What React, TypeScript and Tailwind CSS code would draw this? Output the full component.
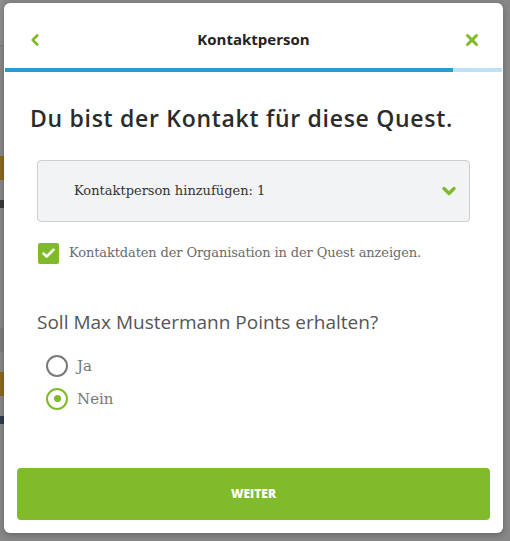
import { Check, ChevronDown, ChevronLeft, X } from "lucide-react";

const sans = { fontFamily: "'Open Sans', 'DejaVu Sans', sans-serif" };
const slab = { fontFamily: "'DejaVu Serif', 'Liberation Serif', serif" };

function Radio({ label, checked }: { label: string; checked?: boolean }) {
  return (
    <label className="flex items-center gap-[9px]">
      <span
        className={`flex h-[22px] w-[22px] items-center justify-center rounded-full border-2 ${
          checked ? "border-[#7fba2b]" : "border-[#7a7a7a]"
        }`}
      >
        {checked && <span className="h-[7px] w-[7px] rounded-full bg-[#7fba2b]" />}
      </span>
      <span className="text-[15px] text-[#777]" style={slab}>
        {label}
      </span>
    </label>
  );
}

export default function App() {
  return (
    <div className="relative h-[541px] w-[510px] overflow-hidden bg-[#878787]">
      {/* page behind the overlay */}
      <div className="flex h-full w-[4px] flex-col">
        <div className="h-[46px] border-b border-[#7a7a7a] bg-[#8d8d8d]" />
        <div className="mt-[110px] h-[24px] bg-[#8a6a1c]" />
        <div className="mt-[20px] h-[8px] bg-[#3a3a3a]" />
        <div className="mt-[120px] h-[24px] bg-[#7d7d7d]" />
        <div className="mt-[20px] h-[24px] bg-[#8a6a1c]" />
        <div className="mt-[20px] h-[8px] bg-[#2e3a4e]" />
      </div>

      {/* modal */}
      <div className="absolute left-[4px] top-[3px] flex h-[530px] w-[499px] flex-col rounded-[6px] bg-white shadow-[0_2px_6px_rgba(0,0,0,0.25)]">
        <div className="flex h-[65px] items-center justify-between px-[22px] pt-[8px]">
          <ChevronLeft className="h-[18px] w-[18px] text-[#7fba2b]" strokeWidth={3.5} />
          <span className="text-[15px] font-bold text-[#222]" style={sans}>
            Kontaktperson
          </span>
          <X className="h-[18px] w-[18px] text-[#7fba2b]" strokeWidth={4} />
        </div>

        <div className="mx-[1px] flex h-[4px] bg-[#bfe0f1]">
          <div className="h-full w-[448px] bg-[#2f9ad2]" />
        </div>

        <div className="flex flex-1 flex-col px-[26px] pt-[29px]">
          <h1 className="text-[23px] font-semibold tracking-[0.7px] text-[#2b2b2b]" style={sans}>
            Du bist der Kontakt für diese Quest.
          </h1>

          <div className="mx-[7px] mt-[24px] flex h-[62px] items-center justify-between rounded-[4px] border border-[#cfcfcf] bg-[#f2f3f5] pl-[36px] pr-[10px]">
            <span className="text-[13px] text-[#333]" style={slab}>
              Kontaktperson hinzufügen: 1
            </span>
            <ChevronDown className="h-[20px] w-[20px] text-[#7fba2b]" strokeWidth={4} />
          </div>

          <label className="ml-[8px] mt-[21px] flex items-center gap-[10px]">
            <span className="flex h-[21px] w-[21px] items-center justify-center rounded-[2px] bg-[#7fba2b]">
              <Check className="h-[15px] w-[15px] text-white" strokeWidth={4} />
            </span>
            <span className="text-[13px] tracking-[-0.12px] text-[#6b6b6b]" style={slab}>
              Kontaktdaten der Organisation in der Quest anzeigen.
            </span>
          </label>

          <p className="ml-[7px] mt-[44px] text-[19px] text-[#555]" style={sans}>
            Soll Max Mustermann Points erhalten?
          </p>

          <div className="ml-[16px] mt-[19px] flex flex-col gap-[10px]">
            <Radio label="Ja" />
            <Radio label="Nein" checked />
          </div>
        </div>

        <div className="px-[13px] pb-[13px]">
          <button
            className="flex h-[52px] w-full items-center justify-center rounded-[4px] bg-[#80bb2a] text-[12px] font-extrabold text-white"
            style={sans}
          >
            WEITER
          </button>
        </div>
      </div>
    </div>
  );
}
